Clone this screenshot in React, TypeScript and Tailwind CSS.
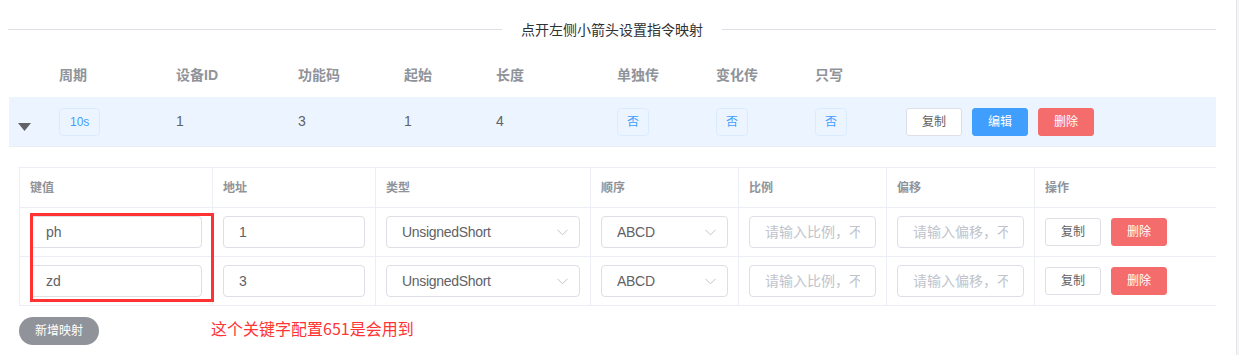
import React from "react";

const FONT = { fontFamily: '"Liberation Sans", Arial, "Noto Sans CJK SC", sans-serif' };

function Chevron() {
  return (
    <svg width="11" height="7" viewBox="0 0 11 7" className="shrink-0">
      <path d="M0.5 0.8 L5.5 5.8 L10.5 0.8" fill="none" stroke="#c0c4cc" strokeWidth="1" />
    </svg>
  );
}

function Input({ value, placeholder }: { value?: string; placeholder?: string }) {
  return (
    <input
      readOnly
      value={value ?? ""}
      placeholder={placeholder}
      className="h-[32px] w-full min-w-0 rounded-[4px] border border-[#dcdfe6] bg-white px-[15px] text-[14px] text-[#606266] outline-none placeholder:text-[#c0c4cc]"
      style={FONT}
    />
  );
}

function Select({ value }: { value: string }) {
  return (
    <div className="h-[32px] w-full rounded-[4px] border border-[#dcdfe6] bg-white pl-[15px] pr-[11px] flex items-center justify-between">
      <span className="text-[14px] tracking-[-0.3px] text-[#606266] whitespace-nowrap">{value}</span>
      <Chevron />
    </div>
  );
}

function Tag({ children, wide }: { children: React.ReactNode; wide?: boolean }) {
  return (
    <span
      className={`inline-flex h-[28px] items-center rounded-[4px] border border-[#d9ecff] bg-[#ecf5ff] text-[12px] text-[#409eff] ${
        wide ? "px-[10px]" : "px-[9px]"
      }`}
    >
      {children}
    </span>
  );
}

const rows = [
  { key: "ph", addr: "1" },
  { key: "zd", addr: "3" },
];

export default function App() {
  return (
    <div className="flex h-[355px] w-[1239px] bg-white" style={FONT}>
      <div className="flex-1 pl-[8px] pr-[20px]">
        {/* divider */}
        <div className="flex h-[58px] items-center">
          <div className="h-px flex-1 bg-[#dcdfe6]" />
          <span className="px-[19px] text-[14px] text-[#303133]" style={{ fontFamily: '"Noto Sans CJK SC", sans-serif' }}>
            点开左侧小箭头设置指令映射
          </span>
          <div className="h-px flex-1 bg-[#dcdfe6]" />
        </div>

        {/* header */}
        <div className="ml-[1px] grid h-[34px] grid-cols-[50px_117px_122px_106px_92px_121px_99px_99px_91px_1fr] items-center text-[14px] font-bold text-[#909399]">
          <div />
          <div>周期</div>
          <div>设备ID</div>
          <div>功能码</div>
          <div>起始</div>
          <div>长度</div>
          <div>单独传</div>
          <div>变化传</div>
          <div>只写</div>
          <div />
        </div>

        {/* expanded row */}
        <div className="ml-[1px] mt-[5px] grid h-[50px] grid-cols-[50px_117px_122px_106px_92px_121px_99px_99px_91px_1fr] items-center border-b border-[#ebeef5] bg-[#ecf5ff] text-[14px] text-[#606266]">
          <div className="flex pl-[9px] pt-[11px]">
            <svg width="13" height="8" viewBox="0 0 13 8">
              <path d="M0 0 H13 L6.5 8 Z" fill="#606266" />
            </svg>
          </div>
          <div><Tag wide>10s</Tag></div>
          <div>1</div>
          <div>3</div>
          <div>1</div>
          <div>4</div>
          <div><Tag>否</Tag></div>
          <div><Tag>否</Tag></div>
          <div><Tag>否</Tag></div>
          <div className="flex gap-[10px]">
            <button className="h-[28px] w-[56px] rounded-[3px] border border-[#dcdfe6] bg-white text-[12px] text-[#606266]">复制</button>
            <button className="h-[28px] w-[56px] rounded-[3px] border border-[#409eff] bg-[#409eff] text-[12px] text-white">编辑</button>
            <button className="h-[28px] w-[56px] rounded-[3px] border border-[#f56c6c] bg-[#f56c6c] text-[12px] text-white">删除</button>
          </div>
        </div>

        {/* inner table */}
        <div className="relative ml-[11px] mt-[20px] border-l border-t border-[#ebeef5]">
          <div className="grid h-[40px] grid-cols-[193px_163px_215px_148px_148px_148px_1fr] border-b border-[#ebeef5] text-[12px] font-bold text-[#909399]">
            {["键值", "地址", "类型", "顺序", "比例", "偏移", "操作"].map((h, i) => (
              <div key={h} className={`flex items-center px-[10px] ${i < 6 ? "border-r border-[#ebeef5]" : ""}`}>
                {h}
              </div>
            ))}
          </div>
          {rows.map((r) => (
            <div key={r.key} className="grid h-[49px] grid-cols-[193px_163px_215px_148px_148px_148px_1fr] border-b border-[#ebeef5]">
              <div className="flex items-center border-r border-[#ebeef5] px-[10px]"><Input value={r.key} /></div>
              <div className="flex items-center border-r border-[#ebeef5] px-[10px]"><Input value={r.addr} /></div>
              <div className="flex items-center border-r border-[#ebeef5] px-[10px]"><Select value="UnsignedShort" /></div>
              <div className="flex items-center border-r border-[#ebeef5] px-[10px]"><Select value="ABCD" /></div>
              <div className="flex items-center border-r border-[#ebeef5] px-[10px]"><Input placeholder="请输入比例，不填默认为1" /></div>
              <div className="flex items-center border-r border-[#ebeef5] px-[10px]"><Input placeholder="请输入偏移，不填默认为0" /></div>
              <div className="flex items-center gap-[10px] px-[10px]">
                <button className="h-[28px] w-[56px] rounded-[3px] border border-[#dcdfe6] bg-white text-[12px] text-[#606266]">复制</button>
                <button className="h-[28px] w-[56px] rounded-[3px] border border-[#f56c6c] bg-[#f56c6c] text-[12px] text-white">删除</button>
              </div>
            </div>
          ))}
          {/* annotation box */}
          <div className="pointer-events-none absolute left-[10px] top-[45px] h-[89px] w-[184px] border-[3px] border-[#ff3333]" />
        </div>

        {/* footer */}
        <div className="ml-[11px] mt-[11px] flex items-start">
          <button className="h-[28px] w-[80px] rounded-full bg-[#909399] text-[12px] text-white">新增映射</button>
          <span className="ml-[112px] mt-[-1px] text-[16px] text-[#ff3333]" style={{ fontFamily: '"Noto Sans CJK SC", sans-serif' }}>
            这个关键字配置651是会用到
          </span>
        </div>
      </div>
      <div className="w-[3px] border-l border-[#e4e4ea] bg-[#f4f4f7]" />
    </div>
  );
}
